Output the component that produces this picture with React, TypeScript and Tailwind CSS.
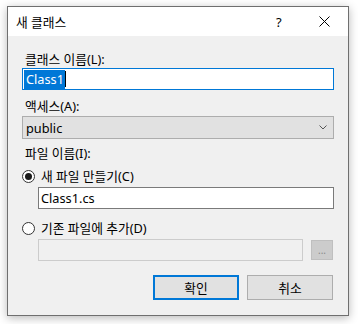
import React from "react";

const font = "font-['Noto_Sans','Noto_Sans_CJK_KR',sans-serif]";

function Radio({ checked }: { checked?: boolean }) {
  return (
    <div className="w-[13px] h-[13px] rounded-full border border-[#333333] bg-white flex items-center justify-center shrink-0">
      {checked && <div className="w-[7px] h-[7px] rounded-full bg-[#1a1a1a]" />}
    </div>
  );
}

export default function App() {
  return (
    <div className={`w-[358px] h-[324px] bg-white pt-[6px] pl-[7px] ${font} text-[12.75px] leading-[16px] text-black`}>
      <div className="w-[342px] h-[310px] border border-[#6f6f6f] bg-[#f0f0f0] shadow-[0_2px_9px_rgba(0,0,0,0.28)] flex flex-col">
        {/* title bar */}
        <div className="h-[29px] bg-white flex items-center pl-[8px] shrink-0">
          <span className="flex-1 pt-[1px]">새 클래스</span>
          <span className="w-[6px] mr-[37px] text-[13px] pt-[1px]">?</span>
          <svg width="11" height="11" viewBox="0 0 11 11" className="mr-[18px]">
            <path d="M0.5 0.5 L10.5 10.5 M10.5 0.5 L0.5 10.5" stroke="#000" strokeWidth="1" />
          </svg>
        </div>
        {/* body */}
        <div className="flex flex-col px-[14px] pt-[15px]">
          <div className="pl-[3px]">클래스 이름(L):</div>
          <div className="mt-[1px] h-[22px] border border-[#0078d7] bg-white flex items-center pl-[1px]">
            <span className="bg-[#0078d7] text-white h-[19px] flex items-center pl-[2px] pr-[1px]">Class1</span>
            <span className="w-[1px] h-[16px] bg-black" />
          </div>

          <div className="pl-[3px] mt-[8px]">액세스(A):</div>
          <div className="mt-[2px] h-[23px] border border-[#adadad] bg-[#e1e1e1] flex items-center pl-[3px] pr-[6px]">
            <span className="flex-1">public</span>
            <svg width="8" height="5" viewBox="0 0 8 5">
              <path d="M0.5 0.5 L4 4 L7.5 0.5" fill="none" stroke="#555" strokeWidth="1" />
            </svg>
          </div>

          <div className="pl-[3px] mt-[6px]">파일 이름(I):</div>
          <div className="mt-[7px] flex items-center gap-[6px]">
            <Radio checked />
            <span>새 파일 만들기(C)</span>
          </div>
          <div className="ml-[16px] mt-[3px] h-[22px] border border-[#7a7a7a] bg-white flex items-center pl-[2px]">
            Class1.cs
          </div>

          <div className="mt-[11px] flex items-center gap-[6px]">
            <Radio />
            <span>기존 파일에 추가(D)</span>
          </div>
          <div className="ml-[16px] mt-[3px] flex items-start gap-[8px]">
            <div className="flex-1 h-[22px] border border-[#cccccc] bg-[#f0f0f0]" />
            <div className="w-[22px] h-[20px] mt-[1px] mr-[1px] border border-[#bfbfbf] bg-[#cccccc] flex items-center justify-center text-[#8a8a8a] text-[10px] leading-[10px]">
              ...
            </div>
          </div>

          <div className="mt-[14px] flex justify-end gap-[8px] pr-[1px]">
            <div className="w-[86px] h-[25px] border-2 border-[#0078d7] bg-[#e1e1e1] flex items-center justify-center">확인</div>
            <div className="w-[86px] h-[25px] border border-[#adadad] bg-[#e1e1e1] flex items-center justify-center">취소</div>
          </div>
        </div>
      </div>
    </div>
  );
}
